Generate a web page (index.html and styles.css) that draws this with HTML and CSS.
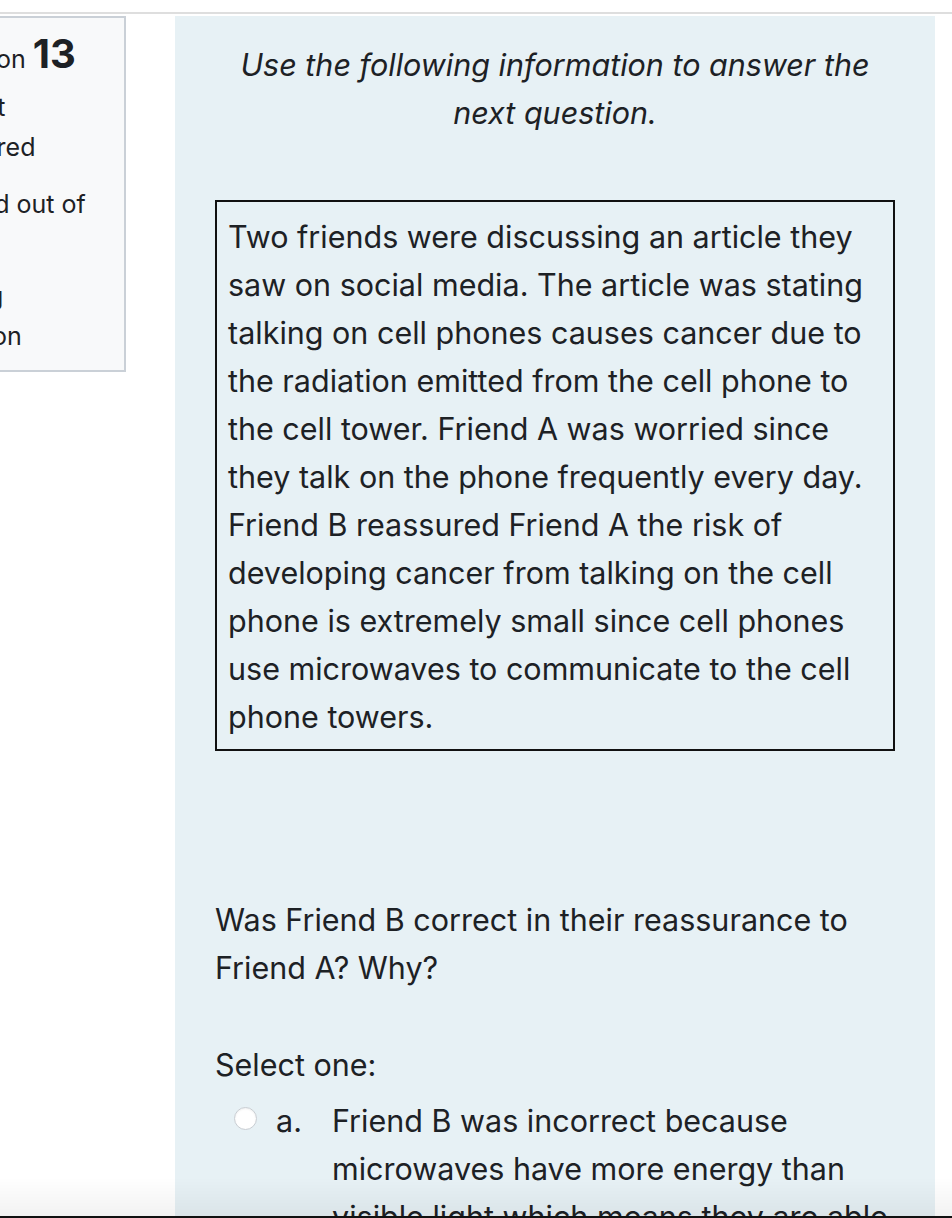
FILE: index.html
```html
<!DOCTYPE html>
<html lang="en">
<head>
<meta charset="utf-8">
<title>Question 13</title>
<link rel="stylesheet" href="styles.css">
</head>
<body>
<div class="topline"></div>
<div class="layout">
  <aside class="info">
    <h3 class="qno">Question <span class="num">13</span></h3>
    <div class="state">Not yet answered</div>
    <div class="grade">Marked out of 1.00</div>
    <div class="flag"><svg class="flagicon" width="22" height="22" viewBox="0 0 22 22" aria-hidden="true"><path d="M4 2v18M4 3h12l-3 4 3 4H4" fill="none" stroke="#1d2125" stroke-width="2"/></svg> Flag question</div>
  </aside>
  <main class="content">
    <p class="intro">Use the following information to answer the next question.</p>
    <div class="passage">Two friends were discussing an article they saw on social media. The article was stating talking on cell phones causes cancer due to the radiation emitted from the cell phone to the cell tower. Friend A was worried since they talk on the phone frequently every day. Friend B reassured Friend A the risk of developing cancer from talking on the cell phone is extremely small since cell phones use microwaves to communicate to the cell phone towers.</div>
    <p class="question">Was Friend B correct in their reassurance to Friend A? Why?</p>
    <p class="prompt">Select one:</p>
    <div class="answer">
      <label class="option">
        <span class="radio"></span>
        <span class="letter">a.</span>
        <span class="otext">Friend B was incorrect because microwaves have more energy than visible light which means they are able to cause damage to cells.</span>
      </label>
    </div>
  </main>
</div>
<div class="bottomedge"></div>
</body>
</html>
```

FILE: styles.css
```css
html, body {
  margin: 0;
  padding: 0;
  background: #ffffff;
  overflow: hidden;
  height: 1218px;
}
body {
  font-family: Inter, "Noto Sans", "Liberation Sans", sans-serif;
  color: #1d2125;
  font-size: 30.5px;
  line-height: 48px;
}
.topline {
  margin-top: 12px;
  height: 2px;
  background: #dedede;
}
.layout {
  display: flex;
  align-items: flex-start;
  margin-top: 2px;
  gap: 49px;
}
.info {
  flex: none;
  margin-left: -99px;
  width: 188px;
  padding: 12px 16px 14px 17px;
  background: #f8f9fa;
  border: 2px solid #cad0d7;
  font-size: 25px;
  line-height: 40px;
}
.qno {
  margin: 0 0 4px;
  font-weight: 400;
  font-size: 25px;
  line-height: 48px;
}
.num {
  font-weight: 700;
  font-size: 40px;
}
.state {
  width: 110px;
  margin-bottom: 17px;
}
.grade {
  width: 175px;
  margin-bottom: 12px;
}
.flag {
  width: 110px;
}
.flagicon {
  vertical-align: -3px;
  margin-right: 4px;
}
.content {
  flex: none;
  width: 680px;
  min-height: 1300px;
  padding: 25px 40px 0 40px;
  background: #e7f1f5;
}
.intro {
  margin: 0 0 63px;
  font-style: italic;
  text-align: center;
}
.passage {
  border: 2px solid #111;
  padding: 11px 12px 8px 11px;
}
.question {
  margin: 145px 0 0;
}
.prompt {
  margin: 49px 0 8px;
}
.answer {
  padding-left: 19px;
}
.option {
  display: flex;
  align-items: flex-start;
}
.radio {
  flex: none;
  width: 21px;
  height: 21px;
  margin: 10px 19px 0 0;
  border-radius: 50%;
  background: #fff;
  border: 1px solid #c8cdd2;
  box-shadow: inset 0 1px 2px rgba(0,0,0,0.06);
}
.letter {
  flex: none;
  width: 56px;
}
.otext {
  flex: 1;
}
.bottomedge {
  position: fixed;
  left: 0;
  right: 0;
  bottom: 0;
  height: 40px;
  background: linear-gradient(to bottom, rgba(0,0,0,0) 0, rgba(0,0,0,0.05) 38px, #111 38px, #111 40px);
  pointer-events: none;
}
```
